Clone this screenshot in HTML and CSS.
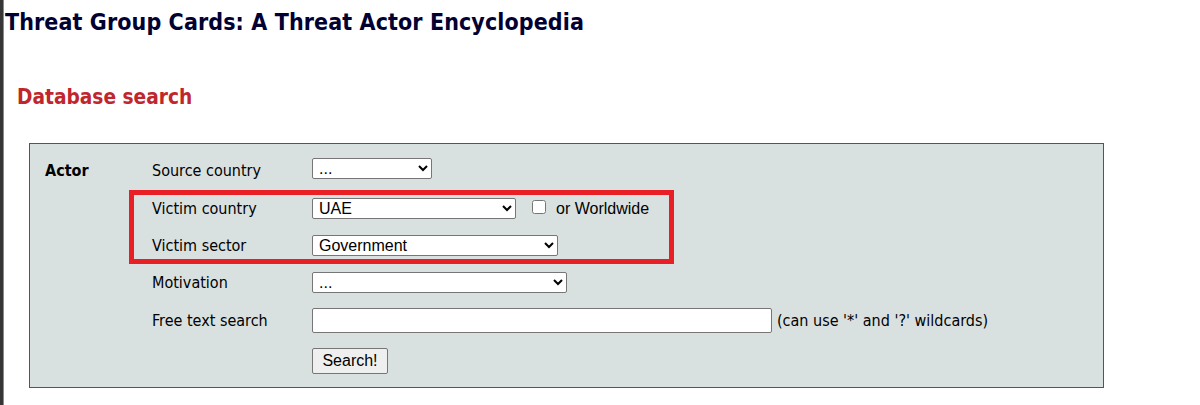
FILE: index.html
```html
<!DOCTYPE html>
<html lang="en">
<head>
<meta charset="utf-8">
<title>Threat Group Cards: A Threat Actor Encyclopedia</title>
<link rel="stylesheet" href="styles.css">
</head>
<body>
<div class="page">
  <h1 class="title">Threat Group Cards: A Threat Actor Encyclopedia</h1>
  <h2 class="section">Database search</h2>
  <form class="search-box">
    <div class="grid">
      <div class="group r1">Actor</div>
      <div class="label r1">Source country</div>
      <div class="ctrl r1"><select class="sel w120"><option>...</option></select></div>

      <div class="label">Victim country</div>
      <div class="ctrl"><select class="sel w204"><option>UAE</option></select><label class="ww"><input type="checkbox" class="chk"> or Worldwide</label></div>

      <div class="label">Victim sector</div>
      <div class="ctrl"><select class="sel w246"><option>Government</option></select></div>

      <div class="label">Motivation</div>
      <div class="ctrl"><select class="sel w255"><option>...</option></select></div>

      <div class="label">Free text search</div>
      <div class="ctrl"><input type="text" class="txt"><span class="hint">(can use '*' and '?' wildcards)</span></div>

      <div class="ctrl btn-cell"><button type="button" class="btn">Search!</button></div>
    </div>
  </form>
  <div class="highlight"></div>
</div>
</body>
</html>
```
FILE: styles.css
```css
html, body {
  margin: 0;
  padding: 0;
  background: #ffffff;
}
body {
  min-height: 405px;
  border-left: 3px solid #363636;
  box-shadow: inset 1px 0 0 #8a8a8a;
  font-family: "DejaVu Sans Condensed", "DejaVu Sans", sans-serif;
  color: #000;
}
.page {
  position: relative;
  padding-left: 2px;
}
.title {
  margin: 0;
  padding-top: 8px;
  font-size: 23px;
  line-height: 28px;
  font-weight: bold;
  color: #000033;
  letter-spacing: 0.1px;
}
.section {
  margin: 48px 0 0 12px;
  font-size: 20.7px;
  line-height: 26px;
  font-weight: bold;
  color: #c0262c;
}
.search-box {
  margin: 33px 0 0 24px;
  width: 1058px;
  border: 1px solid #c0262c;
  background: #d9e1e0;
  padding: 14px 0 13px 15px;
  box-sizing: content-box;
}
.grid {
  display: grid;
  grid-template-columns: 107px 160px 1fr;
  grid-template-rows: 25px 21px 22px 22px 25px 26px;
  row-gap: 15px;
  align-items: center;
}
.group {
  grid-column: 1;
  font-weight: bold;
  font-size: 16px;
}
.label {
  grid-column: 2;
  font-size: 16px;
}
.ctrl {
  grid-column: 3;
  display: flex;
  align-items: center;
}
.r1 {
  align-self: start;
  line-height: 25px;
}
.ctrl.r1 {
  line-height: normal;
  height: 21px;
}
.btn-cell {
  grid-column: 3;
}
.sel {
  height: 21px;
  font-family: "Liberation Sans", Arial, sans-serif;
  font-size: 16px;
  border: 1px solid #767676;
  border-radius: 2px;
  background-color: #fff;
  padding: 0 2px;
  margin: 0;
  box-sizing: border-box;
  color: #000;
}
.w120 { width: 120px; }
.w204 { width: 204px; }
.w246 { width: 246px; }
.w255 { width: 255px; }
.ww {
  display: flex;
  align-items: center;
  margin-left: 16px;
  font-family: "Liberation Sans", Arial, sans-serif;
  font-size: 16px;
}
.chk {
  width: 14px;
  height: 14px;
  margin: -4px 10px 0 0;
}
.txt {
  width: 460px;
  height: 25px;
  box-sizing: border-box;
  border: 1px solid #767676;
  border-radius: 2px;
  margin: 0;
  padding: 1px 2px;
  font-family: "Liberation Sans", Arial, sans-serif;
  font-size: 16px;
  background: #fff;
}
.hint {
  margin-left: 5px;
  font-size: 16px;
}
.btn {
  width: 76px;
  height: 26px;
  font-family: "Liberation Sans", Arial, sans-serif;
  font-size: 16px;
  background: #efefef;
  border: 1px solid #767676;
  border-radius: 2px;
  padding: 0;
  margin: 0;
  color: #000;
}
.highlight {
  position: absolute;
  left: 126px;
  top: 190px;
  width: 535px;
  height: 64px;
  border: 5px solid #e81f25;
  pointer-events: none;
}
```
